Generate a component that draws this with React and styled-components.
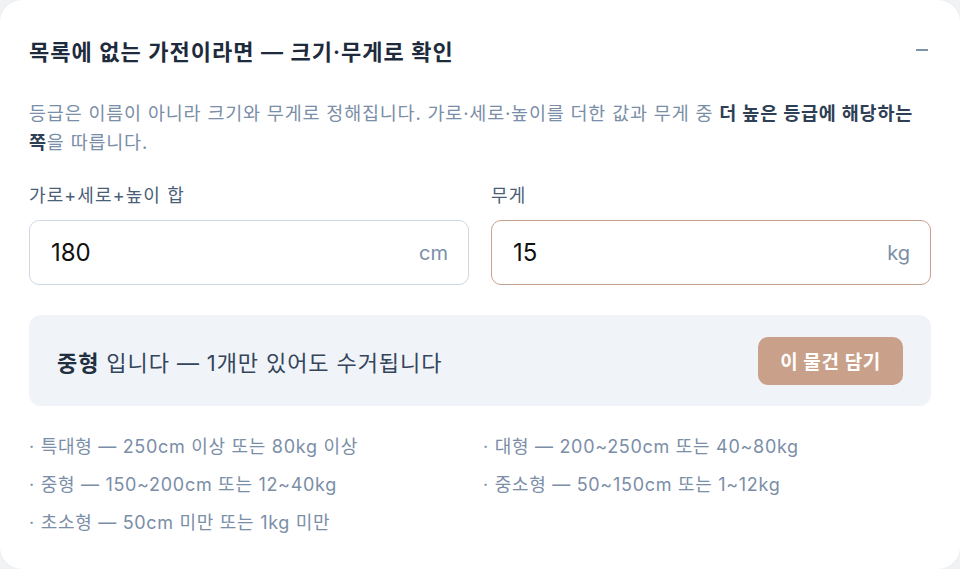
import React from "react";
import styled, { createGlobalStyle } from "styled-components";

const GlobalStyle = createGlobalStyle`
  * { box-sizing: border-box; }
  html, body { margin: 0; padding: 0; }
  body {
    background: #f1f2f4;
    font-family: "Inter", "Noto Sans CJK KR", sans-serif;
    -webkit-font-smoothing: antialiased;
  }
`;

const ranges = [
  "특대형 — 250cm 이상 또는 80kg 이상",
  "대형 — 200~250cm 또는 40~80kg",
  "중형 — 150~200cm 또는 12~40kg",
  "중소형 — 50~150cm 또는 1~12kg",
  "초소형 — 50cm 미만 또는 1kg 미만",
];

const App = () => {
  return (
    <>
      <GlobalStyle />
      <Card>
        <Header>
          <Title>목록에 없는 가전이라면 — 크기·무게로 확인</Title>
          <Collapse aria-label="접기" />
        </Header>
        <Body>
          <Desc>
            등급은 이름이 아니라 크기와 무게로 정해집니다. 가로·세로·높이를 더한
            값과 무게 중 <b>더 높은 등급에 해당하는 쪽</b>을 따릅니다.
          </Desc>
          <Fields>
            <Field>
              <Label>가로+세로+높이 합</Label>
              <InputBox>
                <Value>180</Value>
                <Unit>cm</Unit>
              </InputBox>
            </Field>
            <Field>
              <Label>무게</Label>
              <InputBox $focused>
                <Value>15</Value>
                <Unit>kg</Unit>
              </InputBox>
            </Field>
          </Fields>
          <Result>
            <ResultText>
              <b>중형</b> 입니다 — 1개만 있어도 수거됩니다
            </ResultText>
            <AddButton>이 물건 담기</AddButton>
          </Result>
          <RangeList>
            {ranges.map((r) => (
              <RangeItem key={r}>· {r}</RangeItem>
            ))}
          </RangeList>
        </Body>
      </Card>
    </>
  );
};

export default App;

const Card = styled.div`
  width: 960px;
  height: 569px;
  background: #ffffff;
  border-radius: 22px;
  box-shadow: 0 0 0 1px #eceef1;
  padding: 0 29px;
  overflow: hidden;
`;

const Header = styled.div`
  height: 99px;
  display: flex;
  align-items: center;
  justify-content: space-between;
`;

const Title = styled.h2`
  margin: 0;
  font-size: 22px;
  font-weight: 600;
  color: #1e2b3c;
  letter-spacing: 1px;
`;

const Collapse = styled.button`
  width: 12px;
  height: 2px;
  padding: 0;
  border: none;
  background: #7f93a9;
  margin-right: 3px;
  cursor: pointer;
`;

const Body = styled.div`
  display: flex;
  flex-direction: column;
`;

const Desc = styled.p`
  margin: 0;
  font-size: 18.5px;
  line-height: 29px;
  color: #7b8ea7;
  letter-spacing: 0.8px;
  word-break: keep-all;

  b {
    color: #2f3f55;
    font-weight: 700;
  }
`;

const Fields = styled.div`
  display: grid;
  grid-template-columns: 1fr 1fr;
  gap: 22px;
  margin-top: 27px;
`;

const Field = styled.div`
  display: flex;
  flex-direction: column;
  gap: 12px;
`;

const Label = styled.div`
  font-size: 18px;
  line-height: 24px;
  letter-spacing: 1.1px;
  color: #4a5e76;
`;

const InputBox = styled.div`
  height: 65px;
  border-radius: 10px;
  border: 1.5px solid ${(p) => (p.$focused ? "#c8a28c" : "#cfd9e4")};
  display: flex;
  align-items: center;
  justify-content: space-between;
  padding: 0 20px 0 21px;
`;

const Value = styled.span`
  font-size: 24px;
  color: #111111;
`;

const Unit = styled.span`
  font-size: 20px;
  color: #7b8ea7;
`;

const Result = styled.div`
  margin-top: 30px;
  height: 91px;
  background: #f0f4f8;
  border-radius: 12px;
  display: flex;
  align-items: center;
  justify-content: space-between;
  padding: 0 28px;
`;

const ResultText = styled.div`
  font-size: 22px;
  letter-spacing: 0.9px;
  color: #34455b;

  b {
    font-weight: 700;
    color: #222f40;
  }
`;

const AddButton = styled.button`
  height: 48px;
  width: 145px;
  border: none;
  border-radius: 10px;
  background: #c9a18a;
  color: #ffffff;
  font-family: inherit;
  font-size: 19px;
  letter-spacing: 0.6px;
  font-weight: 700;
  cursor: pointer;
`;

const RangeList = styled.ul`
  list-style: none;
  margin: 28px 0 0;
  padding: 0;
  display: grid;
  grid-template-columns: 454px 1fr;
  row-gap: 12px;
`;

const RangeItem = styled.li`
  font-size: 18px;
  line-height: 26px;
  letter-spacing: 0.7px;
  color: #7b8ea7;
`;
